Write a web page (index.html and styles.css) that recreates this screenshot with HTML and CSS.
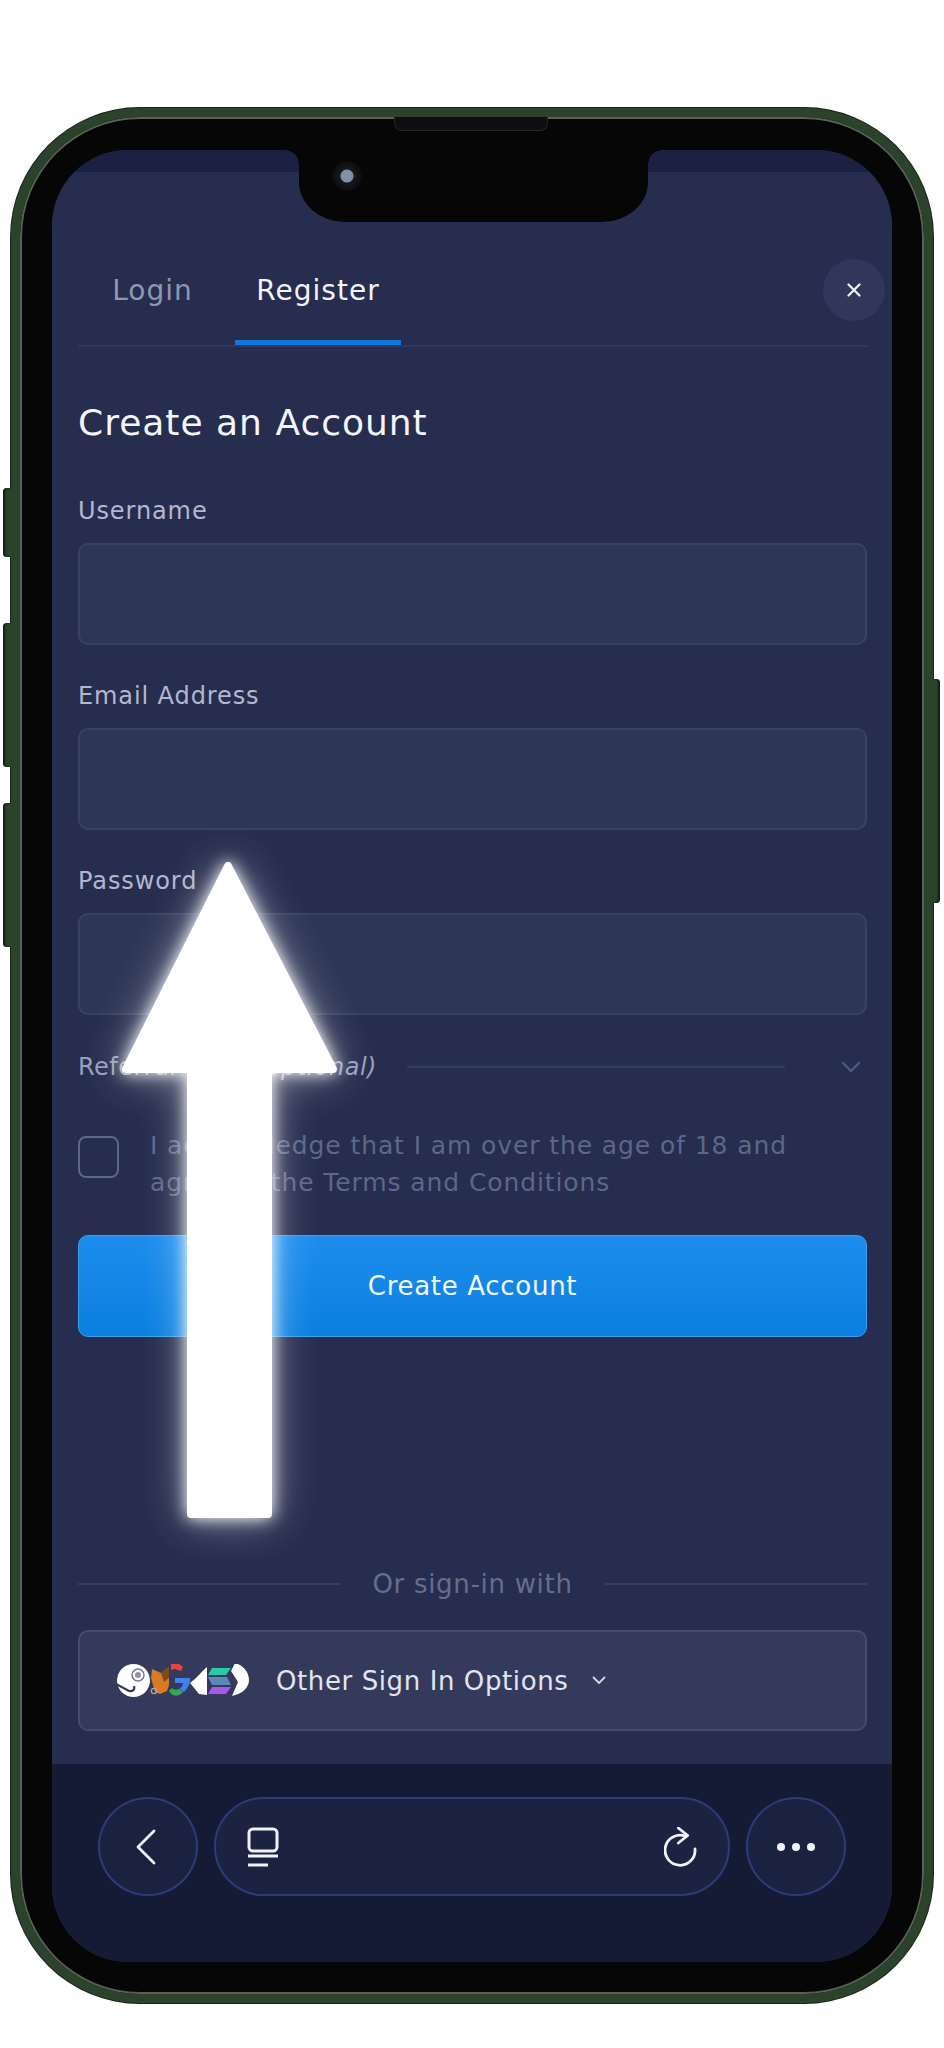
FILE: index.html
```html
<!DOCTYPE html>
<html lang="en">
<head>
    <meta charset="UTF-8">
    <meta name="viewport" content="width=device-width, initial-scale=1.0">
    <title>Create an Account</title>
    <link rel="stylesheet" href="styles.css">
</head>
<body>
    <div class="phone">
        <span class="side-btn mute"></span>
        <span class="side-btn vol-up"></span>
        <span class="side-btn vol-down"></span>
        <span class="side-btn power"></span>

        <div class="screen">
            <div class="status-band"></div>
            <main class="modal">
                <div class="tabs">
                    <a class="tab">Login</a>
                    <a class="tab active">Register</a>
                    <button class="close-btn" aria-label="Close">
                        <svg width="14" height="14" viewBox="0 0 14 14"><path d="M1.5 1.5l11 11M12.5 1.5l-11 11" stroke="#f2f3f8" stroke-width="2.2" stroke-linecap="round"/></svg>
                    </button>
                </div>

                <h1 class="title">Create an Account</h1>

                <label class="field-label first">Username</label>
                <div class="input"></div>
                <label class="field-label">Email Address</label>
                <div class="input"></div>
                <label class="field-label">Password</label>
                <div class="input"></div>

                <div class="referral">
                    <span class="referral-text">Referral Code <em>(optional)</em></span>
                    <span class="referral-line"></span>
                    <svg class="referral-chevron" width="20" height="12" viewBox="0 0 20 12"><path d="M2 2l8 8 8-8" fill="none" stroke="#4f5a80" stroke-width="2.4" stroke-linecap="round" stroke-linejoin="round"/></svg>
                </div>

                <div class="terms">
                    <span class="checkbox"></span>
                    <p>I acknowledge that I am over the age of 18 and<br>agree to the Terms and Conditions</p>
                </div>

                <button class="submit">Create Account</button>

                <div class="separator"><span>Or sign-in with</span></div>

                <button class="other-signin">
                    <svg class="logos" width="134" height="34" viewBox="0 0 134 34">
                        <!-- steam -->
                        <circle cx="16.500" cy="16.500" r="16.500" fill="#fff"/>
                        <path d="M-1 20l13 7c4 1 6-2 5-5" fill="none" stroke="#343a5c" stroke-width="2.200"/>
                        <circle cx="21" cy="11" r="6" fill="#fff" stroke="#6f7590" stroke-width="1.400"/>
                        <circle cx="21" cy="11" r="3" fill="#8f94a8"/>
                        <!-- fox -->
                        <path d="M35 5l9 4 8-6v18l-2 6-7 3-5-2-2-7-2-7z" fill="#d97b22"/>
                        <path d="M44 9l8-6v11l-5 4z" fill="#7d4a1c"/>
                        <circle cx="37" cy="27" r="2.600" fill="none" stroke="#b0aca4" stroke-width="1.200"/>
                        <!-- google -->
                        <path d="M54 0l7-1 5 4-2 4-6-2-4 1z" fill="#e5453c"/>
                        <path d="M58 14h15v3c-1 5-3 8-6 11l-5-3c2-1 4-3 4-6H58z" fill="#3f82ee"/>
                        <path d="M52 27l3-3c2 2 4 2 7 1l4 3c-4 5-11 5-14-1z" fill="#34a853"/>
                        <!-- white slice -->
                        <path d="M90 3v28l-8-1-9-11c6-4 11-11 17-16z" fill="#fff"/>
                        <!-- solana -->
                        <path d="M95 4h19l-5 7H91z" fill="#2bc9a4"/>
                        <path d="M91 13h19l4 8H95z" fill="#5c88b8"/>
                        <path d="M95 23h19l-5 7H91z" fill="#a35ae6"/>
                        <!-- white right -->
                        <path d="M118 -1c8 2 14 9 14 17s-7 14-17 16l6-14-7-11z" fill="#fff"/>
                    </svg>
                    <span>Other Sign In Options</span>
                    <svg width="14" height="9" viewBox="0 0 14 9"><path d="M1.500 1.500L7 7l5.500-5.500" fill="none" stroke="#d5d7e4" stroke-width="1.800" stroke-linecap="round" stroke-linejoin="round"/></svg>
                </button>
            </main>

            <nav class="bottom-bar">
                <button class="round-btn">
                    <svg class="back-icon" width="22" height="36" viewBox="0 0 22 36"><path d="M19 2L3 18l16 16" fill="none" stroke="#f2f3f8" stroke-width="2.800" stroke-linecap="round" stroke-linejoin="round"/></svg>
                </button>
                <div class="pill">
                    <svg width="32" height="40" viewBox="0 0 32 40"><rect x="2" y="2" width="28" height="22" rx="4" fill="none" stroke="#f2f3f8" stroke-width="3"/><path d="M1 29h30M1 38h20" stroke="#f2f3f8" stroke-width="3"/></svg>
                    <svg width="34" height="40" viewBox="0 0 34 40"><path d="M22 9.500A15 15 0 1 0 31 22" fill="none" stroke="#f2f3f8" stroke-width="2.800" stroke-linecap="round"/><path d="M14.300 1l9.400 7.500-9.400 7.500" fill="none" stroke="#f2f3f8" stroke-width="2.800" stroke-linecap="round" stroke-linejoin="round"/></svg>
                </div>
                <button class="round-btn">
                    <svg width="38" height="8" viewBox="0 0 38 8"><circle cx="4" cy="4" r="4" fill="#f2f3f8"/><circle cx="19" cy="4" r="4" fill="#f2f3f8"/><circle cx="34" cy="4" r="4" fill="#f2f3f8"/></svg>
                </button>
            </nav>
        </div>

        <div class="notch">
            <span class="speaker"></span>
            <span class="camera"></span>
        </div>
    </div>

    <!-- arrow drawn on top of the screenshot -->
    <svg class="arrow" width="224" height="680" viewBox="0 0 224 680">
        <path d="M109 21L7 224h65v445h77V224h65z" fill="#fff" stroke="#fff" stroke-width="8" stroke-linejoin="round"/>
    </svg>
</body>
</html>
```

FILE: styles.css
```css
body {
    margin: 0;
    width: 944px;
    height: 2048px;
    overflow: hidden;
    background-color: #fff;
    font-family: "DejaVu Sans", "Liberation Sans", sans-serif;
    position: relative;
}
button {
    font-family: inherit;
    cursor: pointer;
}

/* device */
.phone {
    position: relative;
    box-sizing: border-box;
    width: 922px;
    height: 1895px;
    margin: 108px 0 0 11px;
    padding: 33px 32px 32px 32px;
    background-color: #060606;
    border: 9px solid #2a432a;
    border-radius: 129px;
    box-shadow: inset 0 0 0 2px #5a5f5a, 0 0 0 1px #18241a;
}
.side-btn {
    position: absolute;
    width: 8px;
    background-color: #2a432a;
    border-radius: 4px 0 0 4px;
    box-shadow: inset 2px 0 2px #141d14;
}
.mute { left: -17px; top: 371px; height: 69px; }
.vol-up { left: -17px; top: 506px; height: 144px; }
.vol-down { left: -17px; top: 686px; height: 144px; }
.power { right: -16px; top: 562px; height: 224px; border-radius: 0 4px 4px 0; box-shadow: inset -2px 0 2px #141d14; }

.notch {
    position: absolute;
    left: 279px;
    top: 3px;
    width: 349px;
    height: 102px;
    background-color: #060606;
    border-radius: 0 0 46px 46px / 0 0 40px 40px;
}
/* small rounded shoulders where the screen meets the notch */
.notch::before,
.notch::after {
    content: "";
    position: absolute;
    top: 30px;
    width: 14px;
    height: 14px;
}
.notch::before {
    left: -14px;
    background: radial-gradient(circle at 0 100%, transparent 13.500px, #060606 14px);
}
.notch::after {
    right: -14px;
    background: radial-gradient(circle at 100% 100%, transparent 13.500px, #060606 14px);
}
.speaker {
    position: absolute;
    left: 95px;
    top: -3px;
    width: 154px;
    height: 14px;
    background-color: #0e0e10;
    border: 1px solid #26272a;
    border-top: 0;
    box-sizing: border-box;
    border-radius: 0 0 8px 8px;
}
.camera {
    position: absolute;
    left: 33px;
    top: 41px;
    width: 30px;
    height: 30px;
    background: radial-gradient(circle at 50% 50%, #7e92a8 0 6px, #16181b 7px, #0c0c0e 15px);
    border-radius: 50%;
}

/* screen */
.screen {
    display: flex;
    flex-direction: column;
    height: 100%;
    border-radius: 76px;
    overflow: hidden;
    background-color: #262d4e;
}
.status-band {
    height: 22px;
    flex-shrink: 0;
    background-color: #1c2144;
}
.modal {
    flex: 1;
    padding: 0 25px 0 26px;
    background-color: #262d4e;
}

/* tabs */
.tabs {
    display: flex;
    gap: 8px;
    height: 175px;
    border-bottom: 2px solid #30375a;
    box-sizing: border-box;
    position: relative;
}
.tab {
    box-sizing: border-box;
    width: 149px;
    padding-top: 101px;
    font-size: 28px;
    line-height: 36px;
    letter-spacing: 1px;
    text-align: center;
    color: #9296b0;
}
.tab.active {
    width: 166px;
    color: #f2f3f8;
    border-bottom: 5px solid #0f78d8;
}
.close-btn {
    position: absolute;
    right: -18px;
    top: 87px;
    width: 62px;
    height: 62px;
    padding: 0;
    display: flex;
    align-items: center;
    justify-content: center;
    background-color: #30375a;
    border: 0;
    border-radius: 50%;
}

.title {
    margin: 54px 0 0;
    font-size: 36px;
    font-weight: 400;
    line-height: 44px;
    letter-spacing: 1px;
    color: #f4f5f9;
}

/* form */
.field-label {
    display: block;
    margin-top: 37px;
    font-size: 24px;
    line-height: 28px;
    letter-spacing: 0.9px;
    color: #b4b7ce;
}
.field-label.first {
    margin-top: 52px;
}
.input {
    box-sizing: border-box;
    height: 102px;
    margin-top: 18px;
    background-color: #2e3656;
    border: 2px solid #3a4264;
    border-radius: 10px;
}
.referral {
    display: flex;
    align-items: center;
    height: 28px;
    margin-top: 38px;
    font-size: 24px;
    letter-spacing: 0.5px;
    color: #9b9fba;
}
.referral-line {
    flex: 1;
    height: 2px;
    margin: 0 56px 0 30px;
    background-color: #363e60;
}
.referral-chevron {
    margin-right: 6px;
}
.terms {
    display: flex;
    gap: 31px;
    margin-top: 46px;
}
.terms p {
    margin: 0;
    font-size: 25px;
    line-height: 37px;
    letter-spacing: 0.9px;
    color: #5e6788;
}
.checkbox {
    flex-shrink: 0;
    box-sizing: border-box;
    width: 41px;
    height: 42px;
    margin-top: 9px;
    border: 2px solid #5e6788;
    border-radius: 8px;
}
.submit {
    display: block;
    box-sizing: border-box;
    width: 100%;
    height: 102px;
    margin-top: 34px;
    background: linear-gradient(#1d8ded, #0a7fdf);
    border: 1px solid #3c9eec;
    border-radius: 10px;
    font-size: 26px;
    letter-spacing: 0.7px;
    color: #f4f7fb;
}
.separator {
    display: flex;
    align-items: center;
    gap: 32px;
    height: 28px;
    margin-top: 233px;
    font-size: 26px;
    letter-spacing: 0.7px;
    color: #676d8c;
}
.separator::before,
.separator::after {
    content: "";
    flex: 1;
    height: 2px;
    background-color: #363d5f;
}
.other-signin {
    display: flex;
    align-items: center;
    box-sizing: border-box;
    width: 100%;
    height: 101px;
    margin-top: 32px;
    padding: 0 0 0 37px;
    background-color: #343a5c;
    border: 2px solid #454b6c;
    border-radius: 10px;
    font-size: 26px;
    letter-spacing: 0.6px;
    color: #e2e4ee;
}
.other-signin span {
    margin: 0 24px 0 25px;
}

/* bottom navigation */
.bottom-bar {
    display: flex;
    gap: 16px;
    flex-shrink: 0;
    height: 198px;
    box-sizing: border-box;
    padding: 33px 46px 0 46px;
    background-color: #161b35;
}
.round-btn {
    display: flex;
    align-items: center;
    justify-content: center;
    flex-shrink: 0;
    box-sizing: border-box;
    width: 100px;
    height: 99px;
    padding: 0;
    background-color: #1b2240;
    border: 2px solid #2d3b7c;
    border-radius: 50%;
}
.back-icon {
    margin-left: -5px;
}
.pill {
    flex: 1;
    display: flex;
    align-items: center;
    justify-content: space-between;
    box-sizing: border-box;
    height: 99px;
    padding: 0 30px 0 31px;
    background-color: #1c2340;
    border: 2px solid #2d3b7c;
    border-radius: 50px;
}

.arrow {
    position: absolute;
    left: 119px;
    top: 845px;
    overflow: visible;
    filter: drop-shadow(0 0 8px #fff) drop-shadow(0 0 20px rgba(255, 255, 255, 0.45));
}
```
